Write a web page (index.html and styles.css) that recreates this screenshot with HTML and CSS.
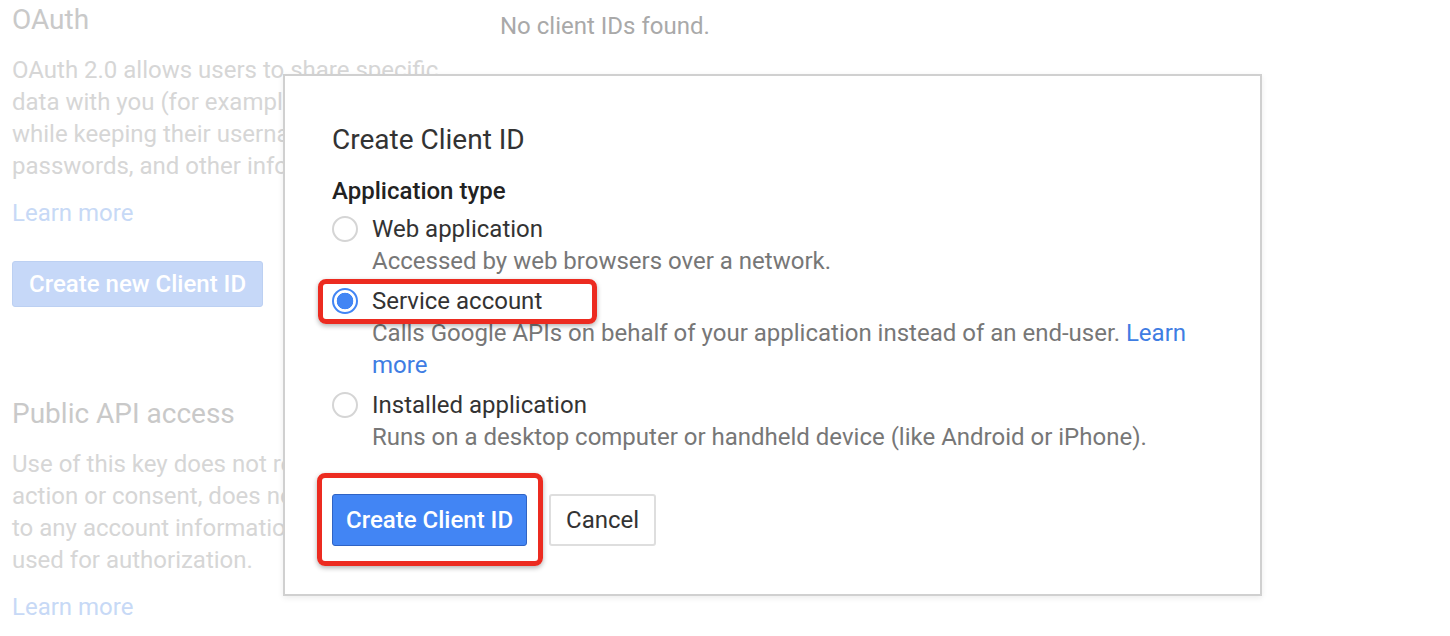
FILE: index.html
```html
<!DOCTYPE html>
<html lang="en">
<head>
<meta charset="utf-8">
<title>Create Client ID</title>
<link rel="stylesheet" href="styles.css">
</head>
<body>
<div class="page">
  <div class="side">
    <section class="block">
      <h2 class="block-title">OAuth</h2>
      <p class="block-text block-text-wide">OAuth 2.0 allows users to share specific data with you (for example, contact lists) while keeping their usernames,<br>passwords, and other information private.</p>
      <a class="block-link" href="#">Learn more</a>
      <button class="ghost-btn" type="button">Create new Client ID</button>
    </section>
    <section class="block block-second">
      <h2 class="block-title">Public API access</h2>
      <p class="block-text">Use of this key does not require any user action or consent, does not grant access to any account information, and is not used for authorization.</p>
      <a class="block-link" href="#">Learn more</a>
    </section>
  </div>
  <div class="main">
    <p class="empty">No client IDs found.</p>
  </div>
</div>

<div class="dialog">
  <h1 class="dialog-title">Create Client ID</h1>
  <div class="field-label">Application type</div>
  <div class="option">
    <div class="option-row">
      <span class="radio"></span>
      <span class="option-label">Web application</span>
    </div>
    <div class="option-desc">Accessed by web browsers over a network.</div>
  </div>
  <div class="option">
    <div class="option-row">
      <span class="highlight highlight-row"></span>
      <span class="radio radio-on"></span>
      <span class="option-label">Service account</span>
    </div>
    <div class="option-desc">Calls Google APIs on behalf of your application instead of an end-user. <a class="link" href="#">Learn more</a></div>
  </div>
  <div class="option">
    <div class="option-row">
      <span class="radio"></span>
      <span class="option-label">Installed application</span>
    </div>
    <div class="option-desc">Runs on a desktop computer or handheld device (like Android or iPhone).</div>
  </div>
  <div class="actions">
    <span class="btn-wrap">
      <span class="highlight highlight-btn"></span>
      <button class="btn btn-primary" type="button">Create Client ID</button>
    </span>
    <button class="btn btn-default" type="button">Cancel</button>
  </div>
</div>
</body>
</html>
```
FILE: styles.css
```css
* { box-sizing: border-box; }
html, body { margin: 0; padding: 0; background: #fff; }
body {
  font-family: Roboto, "Liberation Sans", Arial, sans-serif;
  font-size: 24px;
  line-height: 32px;
  width: 1450px;
  height: 636px;
  overflow: hidden;
  position: relative;
}
.page {
  display: flex;
  padding: 2px 0 0 12px;
}
.side { width: 470px; }
.main { padding-left: 18px; padding-top: 8px; }
.block { display: flex; flex-direction: column; align-items: flex-start; }
.block-second { margin-top: 89px; }
.block-title {
  margin: 0;
  font-size: 28px;
  line-height: 36px;
  font-weight: 400;
  color: #c9c9c9;
}
.block-text {
  margin: 16px 0 0;
  width: 442px;
  color: #d6d6d6;
}
.block-text-wide { width: 470px; }
.block-link {
  margin-top: 15px;
  color: #c7d9f6;
  text-decoration: none;
}
.ghost-btn {
  margin-top: 32px;
  height: 46px;
  padding: 0 16px;
  font: inherit;
  font-weight: 500;
  color: #fff;
  background: #c6d8f8;
  border: 1px solid #bcd0f2;
  border-radius: 3px;
}
.empty {
  margin: 0;
  color: #a9a9a9;
}

.dialog {
  position: absolute;
  left: 283px;
  top: 74px;
  width: 979px;
  height: 522px;
  background: #fff;
  border: 2px solid #d0d0d0;
  box-shadow: 0 2px 6px rgba(0,0,0,0.08);
  padding: 46px 48px 0 47px;
}
.dialog-title {
  margin: 0;
  font-size: 28px;
  line-height: 36px;
  font-weight: 400;
  color: #333;
}
.field-label {
  margin-top: 17px;
  font-weight: 500;
  color: #222;
}
.option { margin-top: 6px; }
.option + .option { margin-top: 8px; }
.option-row {
  position: relative;
  display: flex;
  align-items: center;
  gap: 14px;
  color: #333;
}
.radio {
  width: 26px;
  height: 26px;
  border-radius: 50%;
  border: 2px solid #d5d5d5;
  background: #fff;
  flex: none;
}
.radio-on {
  border-color: #4285f4;
  background: radial-gradient(circle, #4285f4 0 8px, #fff 8.6px);
}
.option-desc {
  padding-left: 40px;
  color: #777;
}
.link { color: #3f7de3; text-decoration: none; }
.actions {
  margin-top: 41px;
  display: flex;
  gap: 22px;
  align-items: center;
}
.btn-wrap { position: relative; display: flex; }
.btn {
  height: 52px;
  font: inherit;
  border-radius: 3px;
  padding: 0 15px;
}
.btn-primary {
  padding: 0 13px;
  background: #4285f4;
  border: 1px solid #2f63c4;
  color: #fff;
  font-weight: 500;
}
.btn-default {
  background: #fff;
  border: 2px solid #dedede;
  color: #333;
}
.highlight {
  position: absolute;
  border: 5px solid #ec2b20;
  border-radius: 8px;
  box-shadow: 0 2px 5px rgba(0,0,0,0.3);
  pointer-events: none;
}
.highlight-row {
  left: -14px;
  top: -6px;
  width: 279px;
  height: 45px;
}
.highlight-btn {
  left: -15px;
  top: -21px;
  right: -16px;
  bottom: -20px;
}
```
